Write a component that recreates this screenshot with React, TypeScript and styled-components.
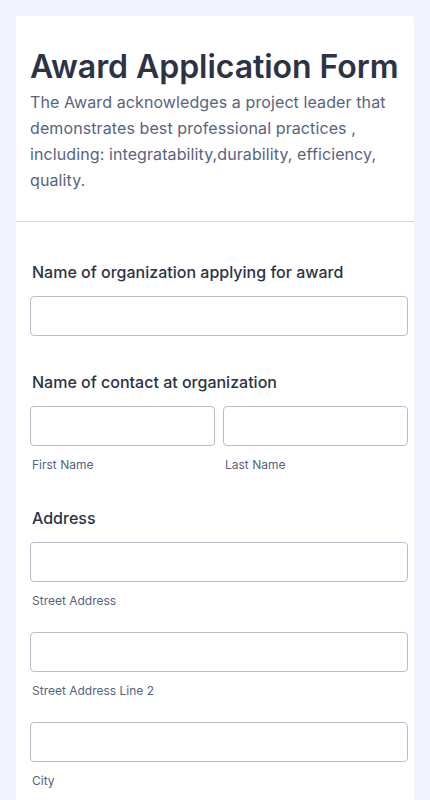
import React from "react";
import styled, { createGlobalStyle } from "styled-components";

const GlobalStyle = createGlobalStyle`
  html, body { margin: 0; padding: 0; }
  body {
    background: #f3f3fe;
    font-family: Inter, "Noto Sans", sans-serif;
    color: #2c3345;
  }
  * { box-sizing: border-box; }
`;

const Page = styled.div`
  padding: 16px 16px 0 16px;
  height: 800px;
  overflow: hidden;
`;

const Card = styled.div`
  background: #ffffff;
  border-radius: 3px 3px 0 0;
  min-height: 800px;
`;

const Header = styled.div`
  padding: 31px 14px 28px 14px;
  border-bottom: 1px solid #d3d6dc;
`;

const Title = styled.h1`
  margin: 0;
  font-size: 32px;
  font-weight: 600;
  line-height: 40px;
  color: #2c3345;
  white-space: nowrap;
  letter-spacing: -0.05px;
`;

const Desc = styled.p`
  margin: 2px 0 0 0;
  font-size: 16px;
  line-height: 26px;
  letter-spacing: 0.1px;
  color: #57647e;
`;

const Body = styled.div`
  padding: 38px 6px 0 14px;
  display: flex;
  flex-direction: column;
`;

const Field = styled.div<{ $gap?: number }>`
  display: flex;
  flex-direction: column;
  margin-bottom: ${(p) => p.$gap ?? 0}px;
`;

const Label = styled.label`
  display: block;
  padding-left: 2px;
  font-size: 16px;
  font-weight: 500;
  line-height: 24px;
  color: #2c3345;
  margin-bottom: 12px;
`;

const Row = styled.div`
  display: flex;
  gap: 8px;
`;

const Col = styled.div`
  flex: 1;
  display: flex;
  flex-direction: column;
`;

const Input = styled.input`
  width: 100%;
  height: 40px;
  border: 1px solid #b8bdc9;
  border-radius: 4px;
  background: #fff;
  font-family: inherit;
  font-size: 15px;
  padding: 0 10px;
  outline: none;
`;

const Sub = styled.span`
  display: block;
  padding-left: 2px;
  margin-top: 11px;
  font-size: 12px;
  line-height: 16px;
  color: #57647e;
`;

const Spaced = styled.div<{ $mb: number }>`
  display: flex;
  flex-direction: column;
  margin-bottom: ${(p) => p.$mb}px;
`;

export default function App() {
  return (
    <>
      <GlobalStyle />
      <Page>
        <Card>
          <Header>
            <Title>Award Application Form</Title>
            <Desc>
              The Award acknowledges a project leader that demonstrates best
              professional practices , including: integratability,durability,
              efficiency, quality.
            </Desc>
          </Header>
          <Body>
            <Field $gap={34}>
              <Label>Name of organization applying for award</Label>
              <Input type="text" />
            </Field>
            <Field $gap={33}>
              <Label>Name of contact at organization</Label>
              <Row>
                <Col>
                  <Input type="text" />
                  <Sub>First Name</Sub>
                </Col>
                <Col>
                  <Input type="text" />
                  <Sub>Last Name</Sub>
                </Col>
              </Row>
            </Field>
            <Field>
              <Label>Address</Label>
              <Spaced $mb={23}>
                <Input type="text" />
                <Sub>Street Address</Sub>
              </Spaced>
              <Spaced $mb={23}>
                <Input type="text" />
                <Sub>Street Address Line 2</Sub>
              </Spaced>
              <Spaced $mb={23}>
                <Input type="text" />
                <Sub>City</Sub>
              </Spaced>
            </Field>
          </Body>
        </Card>
      </Page>
    </>
  );
}
